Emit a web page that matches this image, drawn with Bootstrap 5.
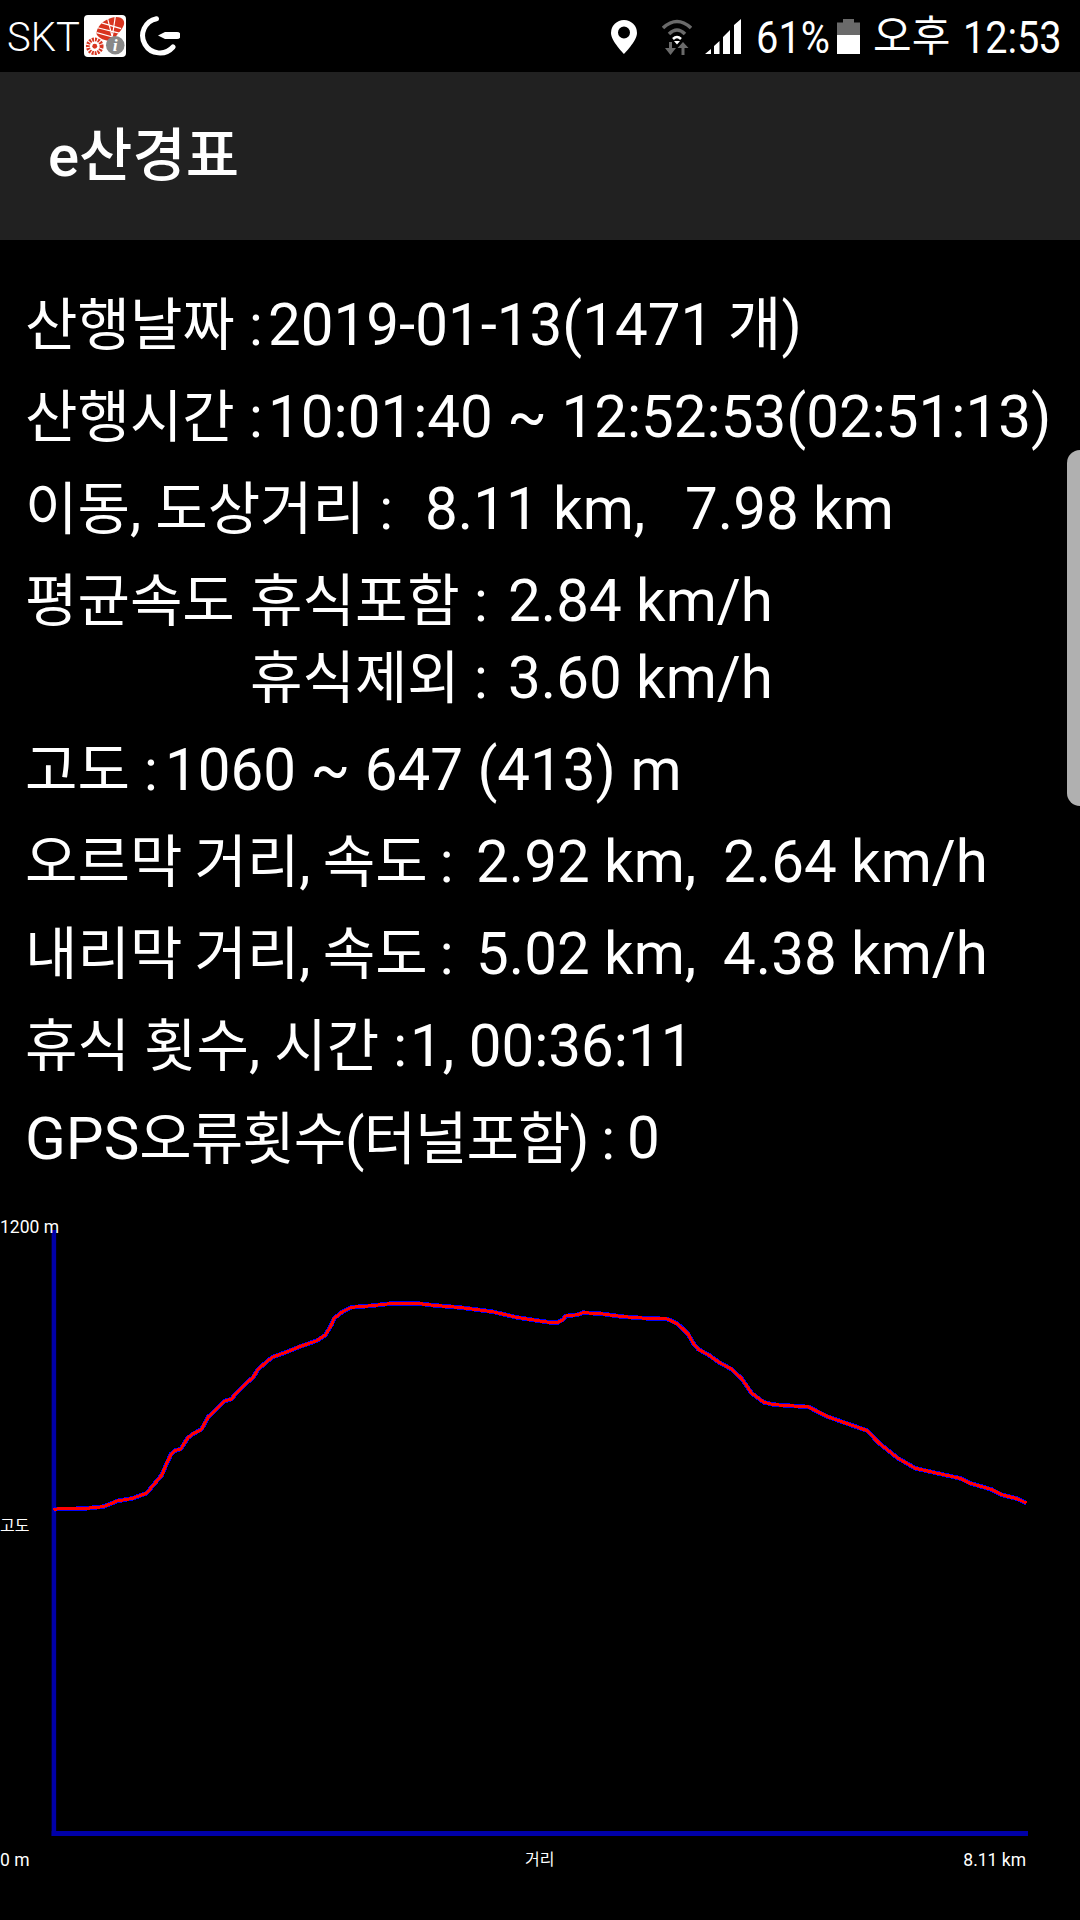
<!DOCTYPE html>
<html lang="ko">
<head>
<meta charset="utf-8">
<title>e산경표</title>
<link rel="stylesheet" href="https://cdn.jsdelivr.net/npm/bootstrap@5.3.0/dist/css/bootstrap.min.css">
<style>
html,body{background:#000;}
body{width:1080px;height:1920px;overflow:hidden;color:#fff;font-family:Roboto,"Noto Sans CJK KR",sans-serif;position:relative;}
svg{display:block;flex:none;}
.sbar{height:72px;background:#000;padding-right:20px;}
.sk-carrier{font-size:40px;font-weight:300;line-height:40px;margin-left:7px;width:70px;margin-top:4px;white-space:nowrap;}
.boot-ic{margin-left:7px;}
.arrow-ic{margin-left:12px;}
.cond{display:block;font-size:44px;line-height:44px;margin-top:4px;transform-origin:left center;white-space:nowrap;}
.pct{width:72px;margin-left:15px;transform:scaleX(.905);}
.ampm{font-size:42px;line-height:44px;width:77px;margin-left:13px;margin-top:2px;white-space:nowrap;}
.clock{width:97px;margin-left:13px;transform:scaleX(.9);}
.pin-ic{margin-top:2px;}
.wifi-ic{margin-left:25px;}
.sig-ic{margin-left:13px;}
.bat-ic{margin-left:9px;}
.appbar{height:168px;background:#212121;padding-left:48px;font-size:58px;font-weight:500;line-height:168px;}
.stats{padding:47px 0 0 25px;font-size:58.300px;line-height:77px;white-space:nowrap;}
.srow{display:flex;margin-bottom:15px;}
.srow-first{margin-bottom:0;}
.lab{font-size:57px;flex:none;}
.lab-tight{word-spacing:-2px;}
.gps{font-size:60px;}
.ko-tight{letter-spacing:-1px;}
.w140{width:140px;}
.w225{width:225px;}
.w243{width:243px;}
.w247{width:247px;}
.w258{width:258px;}
.w260{width:260px;}
.w385{width:385px;}
.w400{width:400px;}
.w451{width:451px;}
.w602{width:602px;}
.chart{position:absolute;left:0;top:1200px;width:1080px;height:720px;}
.tick{position:absolute;font-size:17.500px;line-height:20px;white-space:nowrap;}
.t-top{left:0;top:17px;}
.t-mid{left:0;top:316px;font-size:16px;}
.t-zero{left:0;top:650px;}
.t-dist{left:525px;top:650px;font-size:16px;}
.t-end{right:54px;top:650px;}
.thumb{position:absolute;left:1067px;top:450px;width:13px;height:356px;background:#b0b0b0;border-radius:13px 0 0 13px;}
.c-blue,.c-red{fill:none;vector-effect:non-scaling-stroke;stroke-linejoin:round;shape-rendering:crispEdges;}
.c-blue{stroke:#00f;stroke-width:4.500;}
.c-red{stroke:#f00;stroke-width:3;}
</style>
</head>
<body>
<header class="sbar d-flex align-items-center">
  <div class="sk-carrier">SKT</div>
  <svg class="boot-ic" width="42" height="42" viewBox="0 0 43 43"><rect width="43" height="43" rx="4" fill="#fff"/><path d="M13 20C12 13 20 3 33 2c7 0 10 5 7 10-3 6-7 8-9 13-4 3-14 1-18-5z" fill="#d8341f"/><g stroke="#fff" stroke-width="1.200"><path d="M14 13l24 6M18 8l20 6M13 18l18 5M24 3l5 20M32 2l-3 20"/></g><circle cx="11" cy="32" r="7" fill="none" stroke="#d8341f" stroke-width="4" stroke-dasharray="2 1"/><circle cx="11" cy="32" r="2.500" fill="#d8341f"/><circle cx="32" cy="31" r="9.500" fill="#888"/><text x="32" y="37" font-size="18" font-style="italic" font-weight="700" font-family="Liberation Serif,serif" fill="#fff" text-anchor="middle">i</text></svg>
  <svg class="arrow-ic" width="42" height="40" viewBox="0 0 42 40"><path d="M18.500 2.700A17.300 17.300 0 1 0 35 31" fill="none" stroke="#fff" stroke-width="5" stroke-linecap="round"/><path d="M20 19.500L27 16h12a3.500 3.500 0 0 1 0 7H27z" fill="#fff"/></svg>
  <div class="ms-auto d-flex align-items-center">
    <svg class="pin-ic" width="26" height="34" viewBox="0 0 26 34"><path fill-rule="evenodd" d="M13 0a13 13 0 0 1 13 13C26 21 13 34 13 34S0 21 0 13A13 13 0 0 1 13 0zm0 6.500a6 6 0 1 0 0 12 6 6 0 0 0 0-12z" fill="#fff"/></svg>
    <svg class="wifi-ic" width="30" height="37" viewBox="0 0 30 37"><path d="M1 10Q15-3 29 10M7 16Q15 8 23 16" fill="none" stroke="#6a6a6a" stroke-width="3.500"/><path d="M11 21Q15 17 19 21" fill="none" stroke="#fff" stroke-width="2.500"/><path d="M15 26.500l-3-3.500h6z" fill="#fff"/><path d="M7 24h3v6h4l-5.500 7L3 30h4zM19.500 37v-7h-4L21 24l5.500 6h-4v7z" fill="#6a6a6a"/></svg>
    <svg class="sig-ic" width="36" height="35" viewBox="0 0 36 35"><path d="M0 35L6 30V35ZM9 35V27L14.500 22V35ZM18 35V18L25 11V35ZM29 35V6L36 0V35Z" fill="#fff"/></svg>
    <span class="cond pct">61%</span>
    <svg class="bat-ic" width="23" height="35" viewBox="0 0 23 35"><path d="M6 0h11v3.500h6V16H0V3.500h6z" fill="#6a6a6a"/><rect y="16" width="23" height="19" fill="#fff"/></svg>
    <span class="ampm">오후</span>
    <span class="cond clock">12:53</span>
  </div>
</header>
<nav class="appbar">e산경표</nav>
<main class="stats">
  <div class="srow"><span class="lab w243">산행날짜 :</span><span>2019-01-13(1471 개)</span></div>
  <div class="srow"><span class="lab w243">산행시간 :</span><span>10:01:40 ~ 12:52:53(02:51:13)</span></div>
  <div class="srow"><span class="lab w400">이동, 도상거리 :</span><span class="w260">8.11 km,</span><span>7.98 km</span></div>
  <div class="srow srow-first"><span class="lab w225">평균속도</span><span class="lab w258">휴식포함 :</span><span>2.84 km/h</span></div>
  <div class="srow"><span class="w225"></span><span class="lab w258">휴식제외 :</span><span>3.60 km/h</span></div>
  <div class="srow"><span class="lab w140">고도 :</span><span>1060 ~ 647 (413) m</span></div>
  <div class="srow"><span class="lab lab-tight w451">오르막 거리, 속도 :</span><span class="w247">2.92 km,</span><span>2.64 km/h</span></div>
  <div class="srow"><span class="lab lab-tight w451">내리막 거리, 속도 :</span><span class="w247">5.02 km,</span><span>4.38 km/h</span></div>
  <div class="srow"><span class="lab w385">휴식 횟수, 시간 :</span><span>1, 00:36:11</span></div>
  <div class="srow"><span class="lab w602"><span class="gps">GPS</span><span class="ko-tight">오류횟수(터널포함) :</span></span><span>0</span></div>
</main>
<section class="chart">
  <svg width="1080" height="720" viewBox="0 0 3136 2160" preserveAspectRatio="none">
    <rect x="150" y="90" width="13" height="1818" fill="#0000a8"/>
    <rect x="150" y="1893" width="2835" height="15" fill="#0000a8"/>
    <polyline class="c-blue" points="155,930 165,927 240,926 300,920 320,912 340,903 385,895 425,880 440,862 470,825 482,795 497,762 510,751 525,747 545,714 560,702 585,688 605,650 620,637 650,604 672,597 690,575 715,550 735,532 750,507 790,472 830,457 870,440 920,422 945,405 962,375 970,355 995,335 1020,322 1080,317 1140,310 1210,310 1260,316 1340,323 1430,335 1500,352 1568,363 1603,368 1618,368 1633,360 1643,348 1678,344 1693,338 1743,341 1808,350 1878,355 1938,357 1968,372 1998,402 2013,430 2028,448 2058,465 2088,487 2123,507 2153,535 2183,580 2218,607 2248,614 2348,621 2403,650 2518,692 2553,730 2608,775 2658,805 2788,835 2818,850 2878,868 2908,884 2953,896 2980,909"/>
    <polyline class="c-red" points="155,930 165,927 240,926 300,920 320,912 340,903 385,895 425,880 440,862 470,825 482,795 497,762 510,751 525,747 545,714 560,702 585,688 605,650 620,637 650,604 672,597 690,575 715,550 735,532 750,507 790,472 830,457 870,440 920,422 945,405 962,375 970,355 995,335 1020,322 1080,317 1140,310 1210,310 1260,316 1340,323 1430,335 1500,352 1568,363 1603,368 1618,368 1633,360 1643,348 1678,344 1693,338 1743,341 1808,350 1878,355 1938,357 1968,372 1998,402 2013,430 2028,448 2058,465 2088,487 2123,507 2153,535 2183,580 2218,607 2248,614 2348,621 2403,650 2518,692 2553,730 2608,775 2658,805 2788,835 2818,850 2878,868 2908,884 2953,896 2980,909"/>
  </svg>
  <span class="tick t-top">1200 m</span>
  <span class="tick t-mid">고도</span>
  <span class="tick t-zero">0 m</span>
  <span class="tick t-dist">거리</span>
  <span class="tick t-end">8.11 km</span>
</section>
<div class="thumb"></div>
<script src="https://cdn.jsdelivr.net/npm/bootstrap@5.3.0/dist/js/bootstrap.bundle.min.js"></script>
</body>
</html>
